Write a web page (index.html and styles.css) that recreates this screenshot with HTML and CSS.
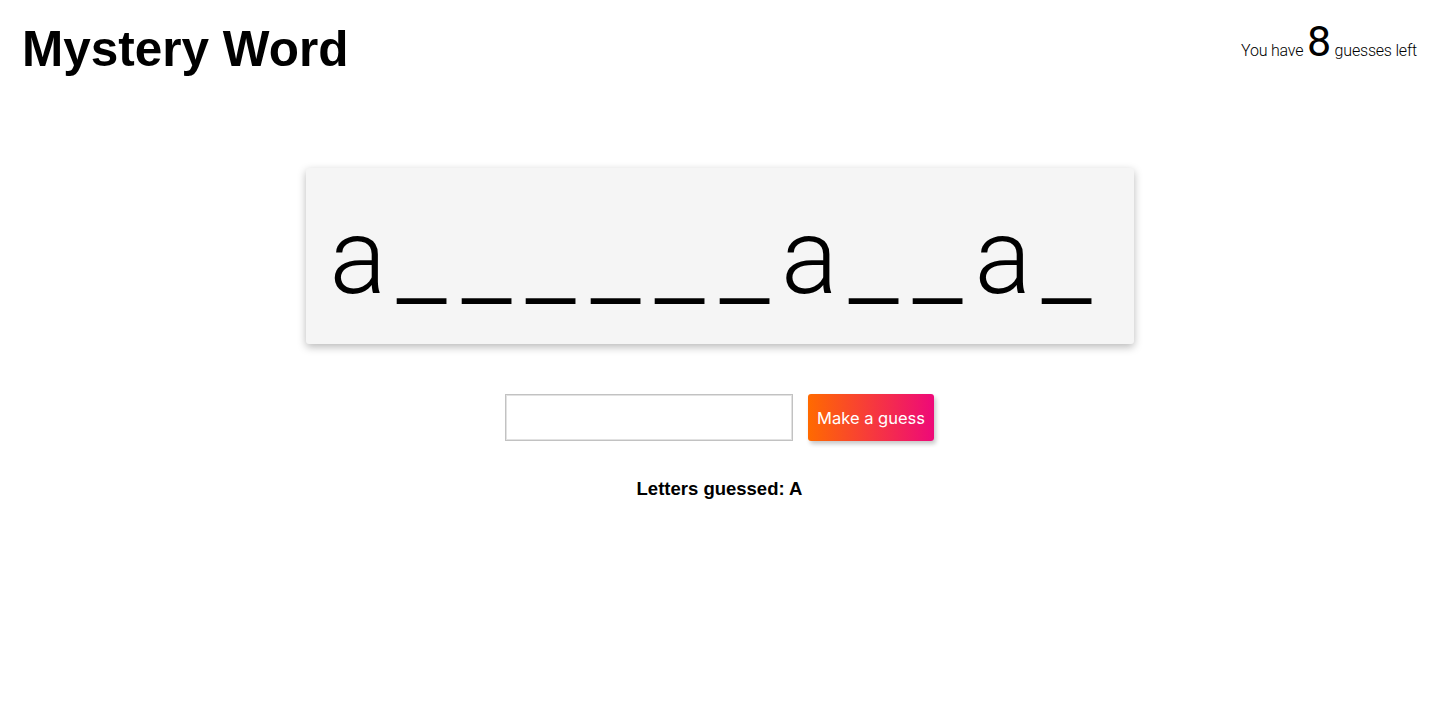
FILE: index.html
```html
<!DOCTYPE html>
<html lang="en">
<head>
<meta charset="utf-8">
<title>Mystery Word</title>
<link rel="stylesheet" href="styles.css">
</head>
<body>
<header class="top">
  <h1 class="title">Mystery Word</h1>
  <p class="remaining">You have <span class="count">8</span> guesses left</p>
</header>
<main class="game">
  <section class="board">
    <div class="word">
      <span class="ch letter">a</span><span class="ch blank">_</span><span class="ch blank">_</span><span class="ch blank">_</span><span class="ch blank">_</span><span class="ch blank">_</span><span class="ch blank">_</span><span class="ch letter">a</span><span class="ch blank">_</span><span class="ch blank">_</span><span class="ch letter">a</span><span class="ch blank">_</span>
    </div>
  </section>
  <form class="guess-form" onsubmit="return false">
    <input class="guess-input" type="text" aria-label="Guess a letter">
    <button class="guess-btn" type="submit">Make a guess</button>
  </form>
  <p class="guessed">Letters guessed: A</p>
</main>
</body>
</html>
```
FILE: styles.css
```css
* { box-sizing: border-box; }
html, body { margin: 0; padding: 0; background: #fff; }
body {
  font-family: "Liberation Sans", Arial, sans-serif;
  color: #000;
  width: 1439px;
  height: 714px;
  overflow: hidden;
}
.top {
  display: flex;
  justify-content: space-between;
  align-items: flex-start;
  padding: 0 22px 0 22px;
}
.title {
  margin: 24px 0 0 0;
  font-size: 49.5px;
  line-height: 49px;
  font-weight: 700;
}
.remaining {
  margin: 20px 0 0 0;
  font-family: Roboto, "Liberation Sans", sans-serif;
  font-weight: 300;
  font-size: 16px;
  line-height: 1;
  color: #000;
  letter-spacing: -0.2px;
}
.count {
  font-size: 43px;
  font-weight: 400;
  line-height: 1;
  color: #000;
}
.game {
  display: flex;
  flex-direction: column;
  align-items: center;
  padding-top: 95px;
}
.board {
  width: 828px;
  height: 176px;
  background: #f5f5f5;
  border-radius: 3px;
  box-shadow: 0 3px 9px rgba(0, 0, 0, 0.28);
  padding: 22px 0 0 28px;
}
.word {
  display: flex;
  align-items: baseline;
  font-size: 122px;
  line-height: 122px;
  white-space: nowrap;
}
.ch {
  display: inline-block;
  width: 64.5px;
  transform-origin: left center;
}
.letter {
  font-family: Roboto, "Liberation Sans", sans-serif;
  font-weight: 300;
  font-size: 106px;
  transform: translateX(-4px);
}
.blank { transform: translateY(3px) scale(0.7, 0.75); }
.guess-form {
  display: flex;
  gap: 15px;
  margin: 50px 0 0 0;
}
.guess-input {
  width: 288px;
  height: 47px;
  border: 1px solid #c2c2c2;
  box-shadow: inset 0 0 0 1px #e2e2e2;
  background: #fff;
  font-size: 18px;
  padding: 0 10px;
  outline: none;
}
.guess-btn {
  width: 126px;
  height: 47px;
  border: none;
  border-radius: 3px;
  background: linear-gradient(to right, #ff6a00, #ee0979);
  color: #fff;
  font-family: Inter, "Open Sans", sans-serif;
  font-size: 16.5px;
  box-shadow: 2px 3px 4px rgba(0, 0, 0, 0.22);
  padding: 0;
  cursor: pointer;
}
.guessed {
  margin: 37px 0 0 0;
  font-size: 18.5px;
  font-weight: 700;
}
```
